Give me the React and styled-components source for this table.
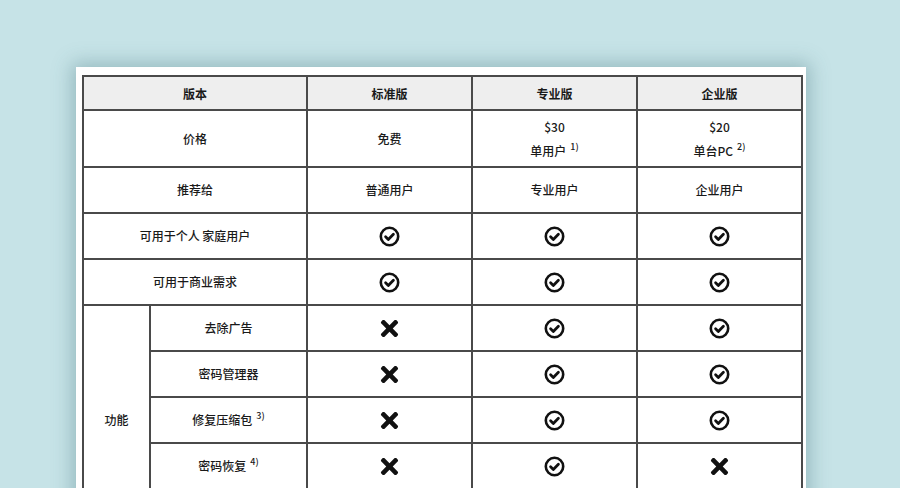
import React from "react";
import styled, { createGlobalStyle } from "styled-components";
import { FaTimes } from "react-icons/fa";

const GlobalStyle = createGlobalStyle`
  body {
    margin: 0;
    background: #c6e3e7;
    font-family: "Noto Sans CJK SC", "Noto Sans", sans-serif;
    overflow: hidden;
  }
`;

const Page = styled.div`
  padding: 67px 0 0 76px;
  height: 488px;
  box-sizing: border-box;
`;

const Card = styled.div`
  width: 730px;
  height: 560px;
  background: #fff;
  box-sizing: border-box;
  padding: 8px 5px 0 6px;
  box-shadow: 0 0 18px 4px rgba(60, 110, 118, 0.35);
`;

const Table = styled.table`
  border-collapse: collapse;
  table-layout: fixed;
  width: 719px;
  color: #1a1a1a;
  font-size: 12px;
`;

const Head = styled.th`
  background: #eeeeee;
  border: 2px solid #4a4a4a;
  height: 32px;
  padding: 0;
  font-weight: 700;
  text-align: center;
`;

const Cell = styled.td`
  border: 2px solid #4a4a4a;
  height: ${(p) => (p.$tall ? 55 : 44)}px;
  padding: 0;
  text-align: center;
  vertical-align: middle;
  font-weight: 500;
  line-height: ${(p) => (p.$tall ? "24px" : "18px")};
`;

const Sup = styled.sup`
  font-size: 9px;
  vertical-align: 6px;
  margin-left: 4px;
  line-height: 0;
`;

const CheckSvg = styled.svg`
  width: 21px;
  height: 21px;
  display: block;
  margin: 0 auto;
`;

const Check = () => (
  <CheckSvg viewBox="0 0 21 21" fill="none" stroke="#111" strokeWidth="2.6">
    <circle cx="10.5" cy="10.5" r="8.7" />
    <path d="M6.6 10.8 L9.3 13.4 L14.4 8.2" strokeLinecap="round" strokeLinejoin="round" strokeWidth="2.8" />
  </CheckSvg>
);

const Cross = styled(FaTimes)`
  font-size: 25px;
  display: block;
  margin: 0 auto;
  color: #111;
`;

const Mark = ({ ok }) => (ok ? <Check /> : <Cross />);

const features = [
  { name: "去除广告", marks: [false, true, true] },
  { name: "密码管理器", marks: [false, true, true] },
  { name: "修复压缩包", note: "3)", marks: [false, true, true] },
  { name: "密码恢复", note: "4)", marks: [false, true, false] },
  { name: "技术支持", marks: [false, true, true] },
];

const App = () => (
  <Page>
    <GlobalStyle />
    <Card>
      <Table>
        <colgroup>
          <col style={{ width: 67 }} />
          <col style={{ width: 157 }} />
          <col style={{ width: 165 }} />
          <col style={{ width: 165 }} />
          <col style={{ width: 165 }} />
        </colgroup>
        <thead>
          <tr>
            <Head colSpan={2}>版本</Head>
            <Head>标准版</Head>
            <Head>专业版</Head>
            <Head>企业版</Head>
          </tr>
        </thead>
        <tbody>
          <tr>
            <Cell $tall colSpan={2}>价格</Cell>
            <Cell $tall>免费</Cell>
            <Cell $tall>
              $30
              <br />
              单用户<Sup>1)</Sup>
            </Cell>
            <Cell $tall>
              $20
              <br />
              单台PC<Sup>2)</Sup>
            </Cell>
          </tr>
          <tr>
            <Cell colSpan={2}>推荐给</Cell>
            <Cell>普通用户</Cell>
            <Cell>专业用户</Cell>
            <Cell>企业用户</Cell>
          </tr>
          <tr>
            <Cell colSpan={2}>可用于个人 家庭用户</Cell>
            <Cell><Mark ok /></Cell>
            <Cell><Mark ok /></Cell>
            <Cell><Mark ok /></Cell>
          </tr>
          <tr>
            <Cell colSpan={2}>可用于商业需求</Cell>
            <Cell><Mark ok /></Cell>
            <Cell><Mark ok /></Cell>
            <Cell><Mark ok /></Cell>
          </tr>
          {features.map((f, i) => (
            <tr key={f.name}>
              {i === 0 && <Cell rowSpan={features.length}>功能</Cell>}
              <Cell>
                {f.name}
                {f.note && <Sup>{f.note}</Sup>}
              </Cell>
              {f.marks.map((m, j) => (
                <Cell key={j}><Mark ok={m} /></Cell>
              ))}
            </tr>
          ))}
        </tbody>
      </Table>
    </Card>
  </Page>
);

export default App;
